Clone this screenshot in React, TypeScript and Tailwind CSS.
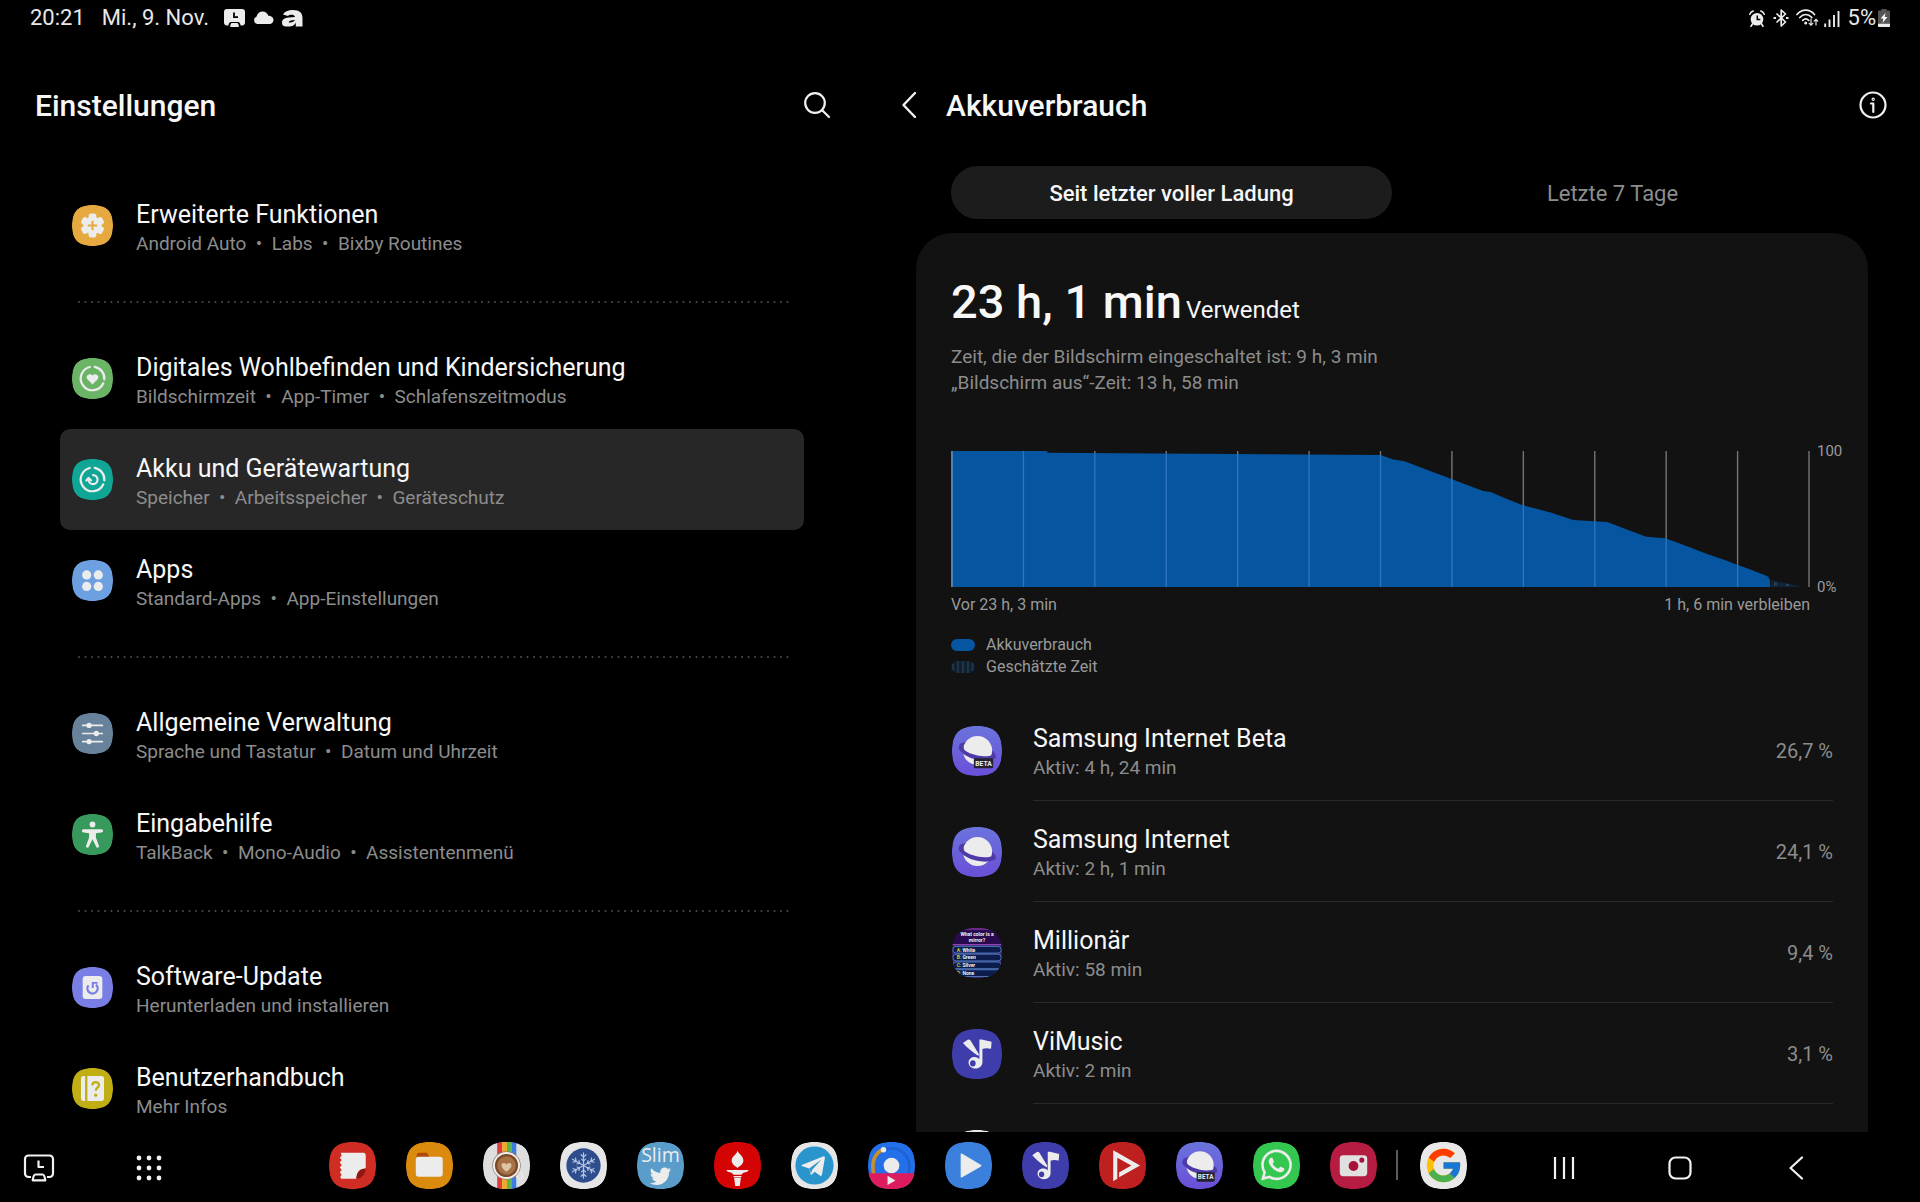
import React from "react";
import { FaTwitter, FaWhatsapp } from "react-icons/fa";
import { FcGoogle } from "react-icons/fc";

const INK = "#ececec";
const SQUIRCLE = "M24 0C41 0 48 7 48 24S41 48 24 48 0 41 0 24 7 0 24 0Z";

/** Rounded launcher tile; children are drawn on a 48 by 48 grid. */
function Tile({ id, fill, className, children }: { id: string; fill: string; className: string; children?: React.ReactNode }) {
  return (
    <svg viewBox="0 0 48 48" className={className} aria-hidden="true">
      <defs>
        <clipPath id={`clip-${id}`}>
          <path d={SQUIRCLE} />
        </clipPath>
        <linearGradient id={`planet-${id}`} x1="0" y1="0" x2="0" y2="1">
          <stop offset="0" stopColor="#6a74dc" />
          <stop offset="1" stopColor="#6a4fd8" />
        </linearGradient>
      </defs>
      <g clipPath={`url(#clip-${id})`}>
        <path d={SQUIRCLE} fill={fill === "planet" ? `url(#planet-${id})` : fill} />
        {children}
      </g>
    </svg>
  );
}

/* ---------- settings icons ---------- */

const CareRing = () => (
  <g fill="none" stroke={INK} strokeWidth="2.6" strokeLinecap="round">
    <path d="M26.6 10.4A13.8 13.8 0 0 1 37.8 25" />
    <path d="M36.6 29.6A13.8 13.8 0 1 1 20.8 10.5" />
  </g>
);

const settingsArt: Record<string, { fill: string; art: React.ReactNode }> = {
  advanced: {
    fill: "#e6a940",
    art: (
      <>
        <g fill={INK}>
          <circle cx="24" cy="24" r="10.5" />
          {[0, 60, 120, 180, 240, 300].map((a) => (
            <rect key={a} x="19.5" y="10" width="9" height="8" rx="2.6" transform={`rotate(${a} 24 24)`} />
          ))}
        </g>
        <path d="M24 18.5v11M18.5 24h11" stroke="#e6a940" strokeWidth="2.4" />
      </>
    ),
  },
  wellbeing: {
    fill: "#6cb465",
    art: (
      <>
        <CareRing />
        <path d="M24 31l-5.700-5.900c-3.400-3.700 2-8.700 5.700-4.600 3.700-4.100 9.100.9 5.700 4.600z" fill={INK} />
      </>
    ),
  },
  battery: {
    fill: "#10a696",
    art: (
      <>
        <CareRing />
        <g fill="none" stroke={INK} strokeWidth="2.5" strokeLinecap="round" strokeLinejoin="round">
          <path d="M19.300 24.500A5.300 5.300 0 1 0 24.600 18.800" />
          <path d="M16.800 25.200l2.500-3 3 2.800" />
        </g>
      </>
    ),
  },
  apps: {
    fill: "#6ca0e0",
    art: (
      <g fill={INK}>
        <circle cx="17.200" cy="17.500" r="5.400" />
        <circle cx="30.800" cy="17.500" r="5.400" />
        <circle cx="17.200" cy="31" r="5.400" />
        <circle cx="30.800" cy="31" r="5.400" />
      </g>
    ),
  },
  general: {
    fill: "#67829a",
    art: (
      <g stroke={INK} strokeWidth="2" strokeLinecap="round" fill={INK}>
        <path d="M12.500 14.500h23M12.500 24h23M12.500 33.500h23" />
        <circle cx="20" cy="14.500" r="2.100" />
        <circle cx="28.500" cy="24" r="2.100" />
        <circle cx="20" cy="33.500" r="2.100" />
      </g>
    ),
  },
  accessibility: {
    fill: "#38995c",
    art: (
      <g fill={INK}>
        <circle cx="24" cy="12.300" r="3.400" />
        <path d="M13.500 17.800h21a1.900 1.900 0 0 1 0 3.900l-6.500.7v5l3.600 10c.5 1.900-2.600 2.800-3.300 1L24 29.500l-4.300 8.900c-.8 1.800-3.800.9-3.300-1l3.600-10v-5l-6.500-.7a1.900 1.900 0 0 1 0-3.900z" />
      </g>
    ),
  },
  update: {
    fill: "#787ee4",
    art: (
      <>
        <rect x="12.500" y="10.500" width="23" height="27" rx="3.500" fill={INK} />
        <g fill="none" stroke="#787ee4" strokeWidth="2.700">
          <path d="M19.200 21.500A6 6 0 1 0 28 20.500" />
          <path d="M24.300 24.500V18.600h5.700" strokeWidth="2.300" />
        </g>
      </>
    ),
  },
  manual: {
    fill: "#c0ae14",
    art: (
      <>
        <path d="M13.500 9.500h1.800v29h-1.800a3 3 0 0 1-3-3v-23a3 3 0 0 1 3-3z" fill={INK} />
        <path d="M18 9.500h16.500a3 3 0 0 1 3 3v23a3 3 0 0 1-3 3H18z" fill={INK} />
        <path d="M23.800 20.300c.2-5.200 8-5 7.800-.2-.1 3-3.800 3-3.800 6.600" fill="none" stroke="#c0ae14" strokeWidth="2.700" />
        <circle cx="27.700" cy="31.800" r="1.900" fill="#c0ae14" />
      </>
    ),
  },
};

type Setting = { key: string; title: string; sub: string; active?: boolean };

const groups: Setting[][] = [
  [{ key: "advanced", title: "Erweiterte Funktionen", sub: "Android Auto  •  Labs  •  Bixby Routines" }],
  [
    { key: "wellbeing", title: "Digitales Wohlbefinden und Kindersicherung", sub: "Bildschirmzeit  •  App-Timer  •  Schlafenszeitmodus" },
    { key: "battery", title: "Akku und Gerätewartung", sub: "Speicher  •  Arbeitsspeicher  •  Geräteschutz", active: true },
    { key: "apps", title: "Apps", sub: "Standard-Apps  •  App-Einstellungen" },
  ],
  [
    { key: "general", title: "Allgemeine Verwaltung", sub: "Sprache und Tastatur  •  Datum und Uhrzeit" },
    { key: "accessibility", title: "Eingabehilfe", sub: "TalkBack  •  Mono-Audio  •  Assistentenmenü" },
  ],
  [
    { key: "update", title: "Software-Update", sub: "Herunterladen und installieren" },
    { key: "manual", title: "Benutzerhandbuch", sub: "Mehr Infos" },
  ],
];

function DottedLine() {
  return (
    <div className="flex h-[52px] items-center pl-[18px] pr-[14px]" role="separator">
      <svg className="h-[2px] w-full" aria-hidden="true">
        <line x1="1" y1="1" x2="100%" y2="1" stroke="#4d4d4d" strokeWidth="2" strokeLinecap="round" strokeDasharray="0 6.5" />
      </svg>
    </div>
  );
}

function SettingsPane() {
  return (
    <section className="flex w-[45%] shrink-0 flex-col overflow-hidden">
      <header className="mt-2 flex h-[122px] shrink-0 items-center justify-between pl-[35px] pr-[33px]">
        <h1 className="pt-0.5 text-[30px] font-medium leading-9">Einstellungen</h1>
        <button aria-label="Suchen">
          <svg viewBox="0 0 28 28" className="size-7" fill="none" stroke="#f2f2f2" strokeWidth="2.200" strokeLinecap="round" aria-hidden="true">
            <circle cx="12" cy="12" r="9.800" />
            <path d="M19.200 19.200L26 26" />
          </svg>
        </button>
      </header>
      <nav className="px-[60px] pt-[9px]">
        {groups.map((group, i) => (
          <React.Fragment key={i}>
            {i > 0 && <DottedLine />}
            <ul>
              {group.map((s) => (
                <li key={s.key}>
                  <a
                    href="#"
                    aria-current={s.active ? "page" : undefined}
                    className={
                      s.active
                        ? "flex h-[101px] items-center gap-[23px] rounded-[10px] bg-[#272727] pl-3"
                        : "flex h-[101px] items-center gap-[23px] pl-3"
                    }
                  >
                    <Tile id={s.key} fill={settingsArt[s.key].fill} className="size-[41px] shrink-0">
                      {settingsArt[s.key].art}
                    </Tile>
                    <span className="flex flex-col pt-1.5">
                      <span className="text-[25px] leading-[30px]">{s.title}</span>
                      <span className="whitespace-pre text-[19px] leading-[28px] text-[#8c8c8c]">{s.sub}</span>
                    </span>
                  </a>
                </li>
              ))}
            </ul>
          </React.Fragment>
        ))}
      </nav>
    </section>
  );
}

/* ---------- app artwork ---------- */

function Planet({ beta }: { beta?: boolean }) {
  return (
    <>
      <ellipse cx="24.500" cy="24" rx="18.300" ry="6.500" transform="rotate(18 24.500 24)" fill="#4f3aa8" />
      <circle cx="24.500" cy="23.500" r="14" fill={INK} />
      <path d="M8 18.500c3 5.500 10 8.500 16.500 9.800 6 1.200 12.500 1 15.500-1.300l2 4c-5.500 3-12.500 2.700-19 1.200C16 30.500 9.500 27 7 22z" fill="#4f3aa8" />
      <path d="M8 17.500c-1.600 1.600-2.200 3.800-.6 6L12 24l-1.600-6.500z" fill="#4f3aa8" />
      {beta && (
        <>
          <rect x="21" y="31" width="18.500" height="9.500" rx="1.500" fill="#24222e" />
          <text x="30.300" y="38.200" textAnchor="middle" fontFamily="Roboto, sans-serif" fontWeight="700" fontSize="6.500" fill={INK}>
            BETA
          </text>
        </>
      )}
    </>
  );
}

const MusicNote = () => (
  <g fill={INK}>
    <path d="M26.300 10h2.200l9.500 2.200-.5 6.800c-3.500-.8-6-.8-8.300.2v12.500c0 4-3.200 6.300-6.500 6.300-4 0-6.800-2.600-6.800-5.800 0-3.700 3.400-5.600 6.800-5.200 1.600.2 2.800 1 3.600 2z" />
    <path d="M10.500 13.500l5-3.500 2 .5 8.500 14-1 1.200C20 22.500 15 18.500 10.500 13.500z" />
    <ellipse cx="20" cy="33" rx="2.700" ry="2.900" fill="#3f3dab" />
  </g>
);

const quizAnswers = [
  { letter: "A:", word: "White", y: 21 },
  { letter: "B:", word: "Green", y: 28.5 },
  { letter: "C:", word: "Silver", y: 36 },
  { letter: "D:", word: "None", y: 43.5 },
];

const Quiz = () => (
  <g fontFamily="Roboto, sans-serif" fontWeight="700" fontSize="4.800">
    <rect width="48" height="16" fill="#2a0a4e" />
    <rect width="48" height="2" fill="#6b2a8a" />
    <rect y="15.500" width="48" height="1" fill="#9a4fc0" />
    <text x="24" y="7.500" textAnchor="middle" fill="#f2f2f2">What color is a</text>
    <text x="24" y="13.300" textAnchor="middle" fill="#f2f2f2">mirror?</text>
    {quizAnswers.map((q) => (
      <g key={q.letter}>
        <rect x=".8" y={q.y - 3.4} width="46.400" height="6.500" rx="3" fill="#0c1c4c" stroke="#4f7fc0" strokeWidth=".9" />
        <text x="4.500" y={q.y + 1.6} fill="#d8c63a">{q.letter}</text>
        <text x="10" y={q.y + 1.6} fill="#f2f2f2">{q.word}</text>
      </g>
    ))}
  </g>
);

type AppUsage = { id: string; name: string; active: string; share: string; fill: string; art: React.ReactNode };

const apps: AppUsage[] = [
  { id: "sib", name: "Samsung Internet Beta", active: "4 h, 24 min", share: "26,7 %", fill: "planet", art: <Planet beta /> },
  { id: "si", name: "Samsung Internet", active: "2 h, 1 min", share: "24,1 %", fill: "planet", art: <Planet /> },
  { id: "quiz", name: "Millionär", active: "58 min", share: "9,4 %", fill: "#43206e", art: <Quiz /> },
  { id: "vim", name: "ViMusic", active: "2 min", share: "3,1 %", fill: "#3f3dab", art: <MusicNote /> },
];

/* ---------- battery chart ---------- */

const gridX = Array.from({ length: 13 }, (_, i) => 1 + (i * 858) / 12);
const USED =
  "M0 0H96L97 1.700L430 4L442 8.300L454 10.300L501 28L532 39.700L541 41.300L554 47L572 54L601 61.700L623 69L644 70.300L657 71L676 78.300L696 85.700L715 87.300L729 92.300L757 103L776 109.500L787 113.700L799 118L817 125Q820 127 820 130V136H0Z";

function Chart() {
  return (
    <svg viewBox="0 0 860 136" preserveAspectRatio="none" className="h-[136px] min-w-0 flex-1" role="img" aria-label="Akkuverbrauch">
      <clipPath id="used">
        <path d={USED} />
      </clipPath>
      <g stroke="#757575" strokeWidth="1.400">
        {gridX.map((x) => (
          <line key={x} x1={x} x2={x} y1="0" y2="136" />
        ))}
      </g>
      <path d={USED} fill="#0655a0" />
      <g stroke="#2c74bd" strokeWidth="1.400" clipPath="url(#used)">
        {gridX.map((x, i) => (
          <line key={x} x1={x} x2={x} y1="0" y2="136" stroke={i === 0 ? "#6f97bd" : undefined} />
        ))}
      </g>
      <path d="M821 129l28 6v1h-28z" fill="#122536" />
      <path d="M824 131.500h3v3h-3zM836 133h3v2h-3z" fill="#27435a" />
    </svg>
  );
}

function UsagePane() {
  return (
    <section className="flex min-w-0 flex-1 flex-col overflow-hidden">
      <header className="mt-2 flex h-[122px] shrink-0 items-center pl-[34px] pr-8">
        <button aria-label="Zurück">
          <svg viewBox="0 0 24 28" className="h-7 w-6" fill="none" stroke="#f2f2f2" strokeWidth="2.400" strokeLinecap="round" strokeLinejoin="round" aria-hidden="true">
            <path d="M17 2L5.500 14 17 26" />
          </svg>
        </button>
        <h2 className="ml-6 flex-1 pt-0.5 text-[30px] font-medium leading-9">Akkuverbrauch</h2>
        <button aria-label="Info">
          <svg viewBox="0 0 30 30" className="size-[30px]" fill="none" stroke="#f2f2f2" strokeWidth="2.200" strokeLinecap="round" strokeLinejoin="round" aria-hidden="true">
            <circle cx="15" cy="15" r="12.500" />
            <path d="M13 13.500h2.300V22" />
            <circle cx="15.200" cy="9.200" r=".6" />
          </svg>
        </button>
      </header>

      <div className="flex min-h-0 flex-1 flex-col px-[52px]">
        <div className="mx-[35px] flex shrink-0 text-[22px] leading-[51px]" role="tablist">
          <button role="tab" aria-selected="true" className="flex-1 rounded-full bg-[#1c1c1c] pt-0.5 font-medium">
            Seit letzter voller Ladung
          </button>
          <button role="tab" aria-selected="false" className="flex-1 pt-0.5 text-[#8c8c8c]">
            Letzte 7 Tage
          </button>
        </div>

        <div className="mt-3.5 min-h-0 flex-1 overflow-hidden rounded-t-[36px] bg-[#121212] px-[35px] pt-[39px]">
          <p className="flex h-[60px] items-baseline gap-1 leading-[60px]">
            <span className="text-[47px] font-medium">23 h, 1 min</span>
            <span className="text-[24px]">Verwendet</span>
          </p>
          <p className="mt-3 text-[19px] leading-[26px] text-[#8c8c8c]">
            Zeit, die der Bildschirm eingeschaltet ist: 9 h, 3 min
            <br />
            „Bildschirm aus“-Zeit: 13 h, 58 min
          </p>

          <figure className="mt-[55px] text-[#9a9a9a]">
            <div className="-mr-2.5 flex gap-[7px]">
              <Chart />
              <div className="-my-2.5 flex w-[26px] flex-col justify-between text-[15px] leading-5">
                <span>100</span>
                <span>0%</span>
              </div>
            </div>
            <div className="mr-[23px] mt-[7px] flex justify-between text-[16px] leading-[22px]">
              <span>Vor 23 h, 3 min</span>
              <span>1 h, 6 min verbleiben</span>
            </div>
            <figcaption className="mt-[18px] text-[16px] leading-[22px]">
              <div className="flex items-center gap-[11px]">
                <svg viewBox="0 0 24 12" className="h-3 w-6" aria-hidden="true">
                  <rect width="24" height="12" rx="6" fill="#0655a0" />
                </svg>
                Akkuverbrauch
              </div>
              <div className="flex items-center gap-[11px]">
                <svg viewBox="0 0 24 12" className="h-3 w-6" aria-hidden="true">
                  <rect width="24" height="12" rx="6" fill="#12202e" />
                  <path d="M2 3v6M7 0v12M12 0v12M17 0v12M21.500 2v8" stroke="#20384f" strokeWidth="1.800" />
                </svg>
                Geschätzte Zeit
              </div>
            </figcaption>
          </figure>

          <ul className="mt-[22px]">
            {apps.map((a) => (
              <li key={a.id}>
                <button className="flex h-[101px] w-full items-center gap-[31px] pl-px text-left">
                  <Tile id={a.id} fill={a.fill} className="size-[50px] shrink-0">
                    {a.art}
                  </Tile>
                  <span className="flex h-full flex-1 items-center justify-between border-b border-[#2a2a2a]">
                    <span className="flex flex-col pt-1.5">
                      <span className="text-[25px] leading-[30px]">{a.name}</span>
                      <span className="text-[19px] leading-[28px] text-[#8c8c8c]">Aktiv: {a.active}</span>
                    </span>
                    <span className="pt-0.5 text-[20px] leading-[30px] text-[#8c8c8c]">{a.share}</span>
                  </span>
                </button>
              </li>
            ))}
            <li className="flex h-[101px] items-center pl-px">
              <Tile id="next" fill="#e8e8e8" className="size-[50px]" />
            </li>
          </ul>
        </div>
      </div>
    </section>
  );
}

/* ---------- status bar ---------- */

function StatusBar() {
  return (
    <div className="flex h-9 shrink-0 items-center justify-between px-[30px] text-[22px] leading-[26px] text-[#e8e8e8]">
      <div className="flex items-center">
        <span>20:21</span>
        <span className="ml-[17px]">Mi., 9. Nov.</span>
        <svg viewBox="0 0 21 18" className="ml-[15px] h-[18px] w-[21px]" aria-hidden="true">
          <path d="M3 0h15a3 3 0 0 1 3 3v10a3 3 0 0 1-3 3.500h-1.300c-.4-1.800-1.200-3.500-2.700-3.500H7c-1.500 0-2.300 1.700-2.700 3.500H3a3 3 0 0 1-3-3.500V3a3 3 0 0 1 3-3z" fill={INK} />
          <path d="M10 3.500v4.700h4" fill="none" stroke="#000" strokeWidth="1.800" />
          <path d="M7.500 14h6c1 1 1.300 2.200 1.300 4H6.200c0-1.800.3-3 1.300-4z" fill={INK} />
        </svg>
        <svg viewBox="0 0 21 14" className="ml-2 h-3.5 w-[21px]" aria-hidden="true">
          <path d="M4.200 13a4 4 0 0 1-.6-7.600C4.300 2 7 .5 9.500.5c3 0 5 1.600 5.800 4.300 3 0 5.200 1.700 5.200 4.300 0 2.400-1.600 3.900-4 3.900z" fill={INK} />
        </svg>
        <svg viewBox="0 0 21 17" className="ml-2 h-[17px] w-[21px]" aria-hidden="true">
          <path d="M1 4.500C2.500 1.500 6 0 11 0c6.500 0 9.500 2.800 9.500 8v8.500H4C1.500 16.500 0 15.200 0 12.700 0 9.500 2.500 8 6.500 7.600L13 7c-.3-1.600-1.700-2.200-3.700-2.200-1.600 0-2.600.4-3.300 1.200z" fill={INK} />
          <path d="M6.500 12.400c.8-1.700 3.200-2.300 6.500-2.400-.8 1.800-3.500 3-6.500 2.400zM7.500 17c3.500-.8 5.500-2.500 6.300-4.500V17z" fill="#000" />
        </svg>
      </div>
      <div className="flex items-center">
        <svg viewBox="0 0 16 17" className="h-[17px] w-4" aria-hidden="true">
          <circle cx="8" cy="9.300" r="6.300" fill={INK} />
          <path d="M3.800 13.500L2 16.300M12.200 13.500l1.800 2.800M.8 4.200Q1.800 1.800 4.200 1M15.200 4.200Q14.200 1.800 11.800 1" fill="none" stroke={INK} strokeWidth="1.600" strokeLinecap="round" />
          <path d="M8.300 5.500v4h3" fill="none" stroke="#000" strokeWidth="1.500" />
        </svg>
        <svg viewBox="0 0 16 18" className="ml-2 h-[18px] w-4" fill="none" stroke={INK} strokeWidth="1.700" strokeLinejoin="round" aria-hidden="true">
          <path d="M3.500 4.500l9 8.500L8.200 17V1l4.300 4-9 8.500" />
          <path d="M.5 9H3M13 9h2.500" strokeWidth="2" />
        </svg>
        <svg viewBox="0 0 23 18" className="ml-[7px] h-[18px] w-[23px]" fill="none" stroke={INK} strokeWidth="1.700" strokeLinecap="round" aria-hidden="true">
          <path d="M1 5.500C6-.3 13.500-.3 18.500 5.500M3.800 8.500c3.500-4 8.500-4 12 0M6.700 11.300c2-2 4-2 6 0" />
          <circle cx="9.700" cy="14" r=".7" fill={INK} />
          <path d="M15 10v6M13.200 14.300L15 16.200l1.800-1.900M20 16v-5.500M18.200 12.200L20 10.300l1.800 1.900" strokeWidth="1.200" />
        </svg>
        <svg viewBox="0 0 16 17" className="ml-[5px] h-[17px] w-4" stroke={INK} strokeWidth="1.900" aria-hidden="true">
          <path d="M1.200 17v-3.500M5.500 17V9.500M10 17V5" />
          <path d="M14.500 17V1" />
        </svg>
        <span className="ml-2">5%</span>
        <svg viewBox="0 0 12 18" className="ml-0.5 h-[18px] w-3" aria-hidden="true">
          <path d="M3.500 0h5v1.500H11a1 1 0 0 1 1 1V17a1 1 0 0 1-1 1H1a1 1 0 0 1-1-1V2.500a1 1 0 0 1 1-1h2.500z" fill="#555" />
          <path d="M0 14.800h12V17a1 1 0 0 1-1 1H1a1 1 0 0 1-1-1z" fill={INK} />
          <path d="M7.500 4L2.600 9.600h2.800L4.500 14l4.900-5.900H6.600z" fill="#fff" />
        </svg>
      </div>
    </div>
  );
}

/* ---------- dock ---------- */

const snowArms = [0, 60, 120, 180, 240, 300];

const dock: { id: string; label: string; fill: string; art: React.ReactNode }[] = [
  {
    id: "notes",
    label: "Notes",
    fill: "#cf2c24",
    art: (
      <>
        <path d="M12 11h23a2.500 2.500 0 0 1 2.500 2.500V27c-6 0-9.500 4-9.500 10.500H12.500l-1-2 1.500-2-2-2.500 2-2.500-2-2.500 2-2.500-2-2.500 2-2.500-2-2.500 2-2z" fill={INK} />
        <path d="M37.500 27c-6 0-9.500 4-9.500 10.500 5 0 9.500-5 9.500-10.500z" fill="#8f1714" />
      </>
    ),
  },
  {
    id: "files",
    label: "Eigene Dateien",
    fill: "#da8a0c",
    art: (
      <>
        <path d="M11 13a2 2 0 0 1 2-2h8.500l2 3.500V18H11z" fill="#b04a0c" />
        <rect x="10" y="15" width="27.500" height="20.500" rx="3" fill={INK} />
      </>
    ),
  },
  {
    id: "coffee",
    label: "Kaffee",
    fill: "#dedede",
    art: (
      <>
        <path d="M14.500 0h5v48h-5z" fill="#e0393e" />
        <path d="M19.500 0h5v48h-5z" fill="#eda92c" />
        <path d="M24.500 0h4.500v48h-4.500z" fill="#5cb54c" />
        <path d="M29 0h5v48h-5z" fill="#3b7de0" />
        <circle cx="37.500" cy="34.500" r="3" fill="none" stroke="#e8e8e8" strokeWidth="2" />
        <circle cx="24" cy="24" r="14.500" fill="#8c7a6c" />
        <circle cx="24" cy="24" r="13.900" fill="#f0eeea" />
        <circle cx="24" cy="24" r="11.800" fill="#7a4a2a" />
        <circle cx="24" cy="24" r="9.500" fill="#a87248" />
        <path d="M24 30.500c-6.500-4.500-6-8.500-3-9 1.700-.2 2.600 1 3 1.800.4-.8 1.300-2 3-1.800 3 .5 3.500 4.500-3 9z" fill="#dcc4a4" />
      </>
    ),
  },
  {
    id: "snow",
    label: "Eis",
    fill: "#e6e6e6",
    art: (
      <>
        <circle cx="24" cy="24" r="17.500" fill="#2d4d8c" />
        <g fill="none" stroke="#b4c6e2" strokeWidth="1.200" strokeLinecap="round">
          {snowArms.map((a) => (
            <path key={a} d="M24 24V11M24 15.500l-2.500-2.500M24 15.500l2.500-2.500M24 19.500l-2-2M24 19.500l2-2" transform={`rotate(${a} 24 24)`} />
          ))}
        </g>
      </>
    ),
  },
  {
    id: "slim",
    label: "Slim Twitter",
    fill: "#5a9cca",
    art: (
      <>
        <text x="24" y="20" textAnchor="middle" fontFamily="'Open Sans', sans-serif" fontSize="20" fill={INK}>
          Slim
        </text>
        <FaTwitter x="13" y="24" size={22} color={INK} />
      </>
    ),
  },
  {
    id: "torch",
    label: "Fackel",
    fill: "#d40404",
    art: (
      <g fill={INK}>
        <path d="M24 9c1 3 6 5.500 6 10 0 3.500-3 5.500-6 7.500-3-2-6-4-6-7.500 0-2.500 1.500-4 3-5.500 1.200-1.200 2.600-2.500 3-4.500z" />
        <path d="M12.500 28.500h23l-1.500 1.800c-3 .5-5 1.200-6 3.200h-8c-1-2-3-2.700-6-3.200zM20.500 36.500h7L26.300 45h-4.600z" />
        <path d="M20 34.700h8v1.300h-8z" />
      </g>
    ),
  },
  {
    id: "telegram",
    label: "Telegram",
    fill: "#e6e6e6",
    art: (
      <>
        <circle cx="24" cy="24" r="19.500" fill="#2a95cc" />
        <path
          d="M11.500 23.200L32.800 14.800c1.200-.4 2 .2 1.800 1.500l-3 17.200c-.2 1.200-1.200 1.500-2.200.8l-5.200-4-2.900 2.900c-.6.5-1.300.3-1.400-.5l-1.300-5.700-6.900-2.200c-1.200-.4-1.200-1.200-.2-1.600z"
          fill={INK}
        />
        <path d="M18.600 27L31 17.800 21.500 28.500l-1 4z" fill="#2a95cc" />
      </>
    ),
  },
  {
    id: "track",
    label: "Kreis",
    fill: "#2470ea",
    art: (
      <>
        <circle cx="24" cy="25" r="18.500" fill="none" stroke="#1f62d4" strokeWidth="3" />
        <path d="M6 33C3 21 7 11 15.500 8" fill="none" stroke="#c8902c" strokeWidth="3.800" />
        <circle cx="15.800" cy="7.800" r="2.800" fill={INK} />
        <path d="M0 32h48v16H0z" fill="#dc1c5e" />
        <circle cx="24" cy="24" r="8" fill={INK} />
        <path d="M20 34.500l8 4.700-8 4.700z" fill={INK} />
      </>
    ),
  },
  {
    id: "play",
    label: "Video",
    fill: "#3a80dc",
    art: <path d="M16 12.500v23a.8.8 0 0 0 1.200.7L36.800 25a.9.9 0 0 0 0-1.500L17.200 11.800a.8.8 0 0 0-1.200.7z" fill={INK} />,
  },
  { id: "music", label: "ViMusic", fill: "#3f3dab", art: <MusicNote /> },
  {
    id: "tube",
    label: "Player",
    fill: "#be2020",
    art: (
      <>
        <path d="M14.500 8.500L42 24 20.500 36v-4.800L33 24 18.700 16v21.500l-4.200 2.500z" fill={INK} />
        <path d="M18.700 16v-5" stroke={INK} strokeWidth="1" />
      </>
    ),
  },
  { id: "internet", label: "Samsung Internet Beta", fill: "planet", art: <Planet beta /> },
  {
    id: "whatsapp",
    label: "WhatsApp",
    fill: "#33c750",
    art: <FaWhatsapp x="6" y="5.500" size={36} color={INK} />,
  },
  {
    id: "camera",
    label: "Kamera",
    fill: "#b61c42",
    art: (
      <>
        <rect x="10" y="13.500" width="28" height="21.500" rx="3.500" fill="#e0e0e0" />
        <circle cx="24" cy="24.500" r="5" fill="#a8123a" />
        <circle cx="32.500" cy="18.500" r="2.600" fill="#a8123a" />
      </>
    ),
  },
];

function Taskbar() {
  return (
    <footer className="flex h-[70px] shrink-0 items-center pb-1">
      <div className="flex w-[329px] shrink-0 items-center gap-[81px] pl-[23px] pt-1.5">
        <button aria-label="Bildschirmzeit">
          <svg viewBox="0 0 32 28" className="h-7 w-8" fill="none" stroke="#f2f2f2" strokeWidth="2.200" strokeLinejoin="round" aria-hidden="true">
            <path d="M8 23H5.500a3.500 3.500 0 0 1-3.500-3.500V5a3.500 3.500 0 0 1 3.500-3.500h21A3.500 3.500 0 0 1 30 5v14.500a3.500 3.500 0 0 1-3.500 3.500H24" />
            <path d="M15.500 6.500V13H21" />
            <path d="M12.500 20.500h7c1.700 0 2.300 2 2.800 5.800H9.700c.5-3.800 1.100-5.800 2.800-5.800z" />
          </svg>
        </button>
        <button aria-label="Alle Apps">
          <svg viewBox="0 0 26 26" className="size-[26px]" fill="#f2f2f2" aria-hidden="true">
            {[3, 13, 23].map((y) => [3, 13, 23].map((x) => <circle key={`${x}-${y}`} cx={x} cy={y} r="2.400" />))}
          </svg>
        </button>
      </div>
      <div className="flex items-center gap-[30px]">
        {dock.map((d) => (
          <button key={d.id} aria-label={d.label}>
            <Tile id={`dock-${d.id}`} fill={d.fill} className="size-[47px]">
              {d.art}
            </Tile>
          </button>
        ))}
      </div>
      <div className="ml-[19px] h-[30px] w-0.5 bg-[#5c5c5c]" />
      <button aria-label="Google" className="ml-[22px]">
        <Tile id="dock-google" fill="#e8e8e8" className="size-[47px]">
          <FcGoogle x="3.500" y="3.500" size={41} />
        </Tile>
      </button>
      <div className="ml-auto flex items-center gap-[92px] pr-[112px] pt-1.5">
        <button aria-label="Letzte Apps">
          <svg viewBox="0 0 24 24" className="size-6" stroke="#f2f2f2" strokeWidth="2.200" aria-hidden="true">
            <path d="M3 1v22M12 1v22M21 1v22" />
          </svg>
        </button>
        <button aria-label="Startbildschirm">
          <svg viewBox="0 0 24 24" className="size-6" fill="none" stroke="#f2f2f2" strokeWidth="2.200" aria-hidden="true">
            <rect x="1.500" y="1.500" width="21" height="21" rx="6" />
          </svg>
        </button>
        <button aria-label="Zurück">
          <svg viewBox="0 0 24 24" className="size-6" fill="none" stroke="#f2f2f2" strokeWidth="2.200" strokeLinecap="round" strokeLinejoin="round" aria-hidden="true">
            <path d="M18 1.500L6.500 12 18 22.500" />
          </svg>
        </button>
      </div>
    </footer>
  );
}

export default function App() {
  return (
    <div className="flex h-screen flex-col overflow-hidden bg-black font-['Roboto',sans-serif] text-[#f7f7f7]">
      <StatusBar />
      <main className="flex min-h-0 flex-1">
        <SettingsPane />
        <UsagePane />
      </main>
      <Taskbar />
    </div>
  );
}
